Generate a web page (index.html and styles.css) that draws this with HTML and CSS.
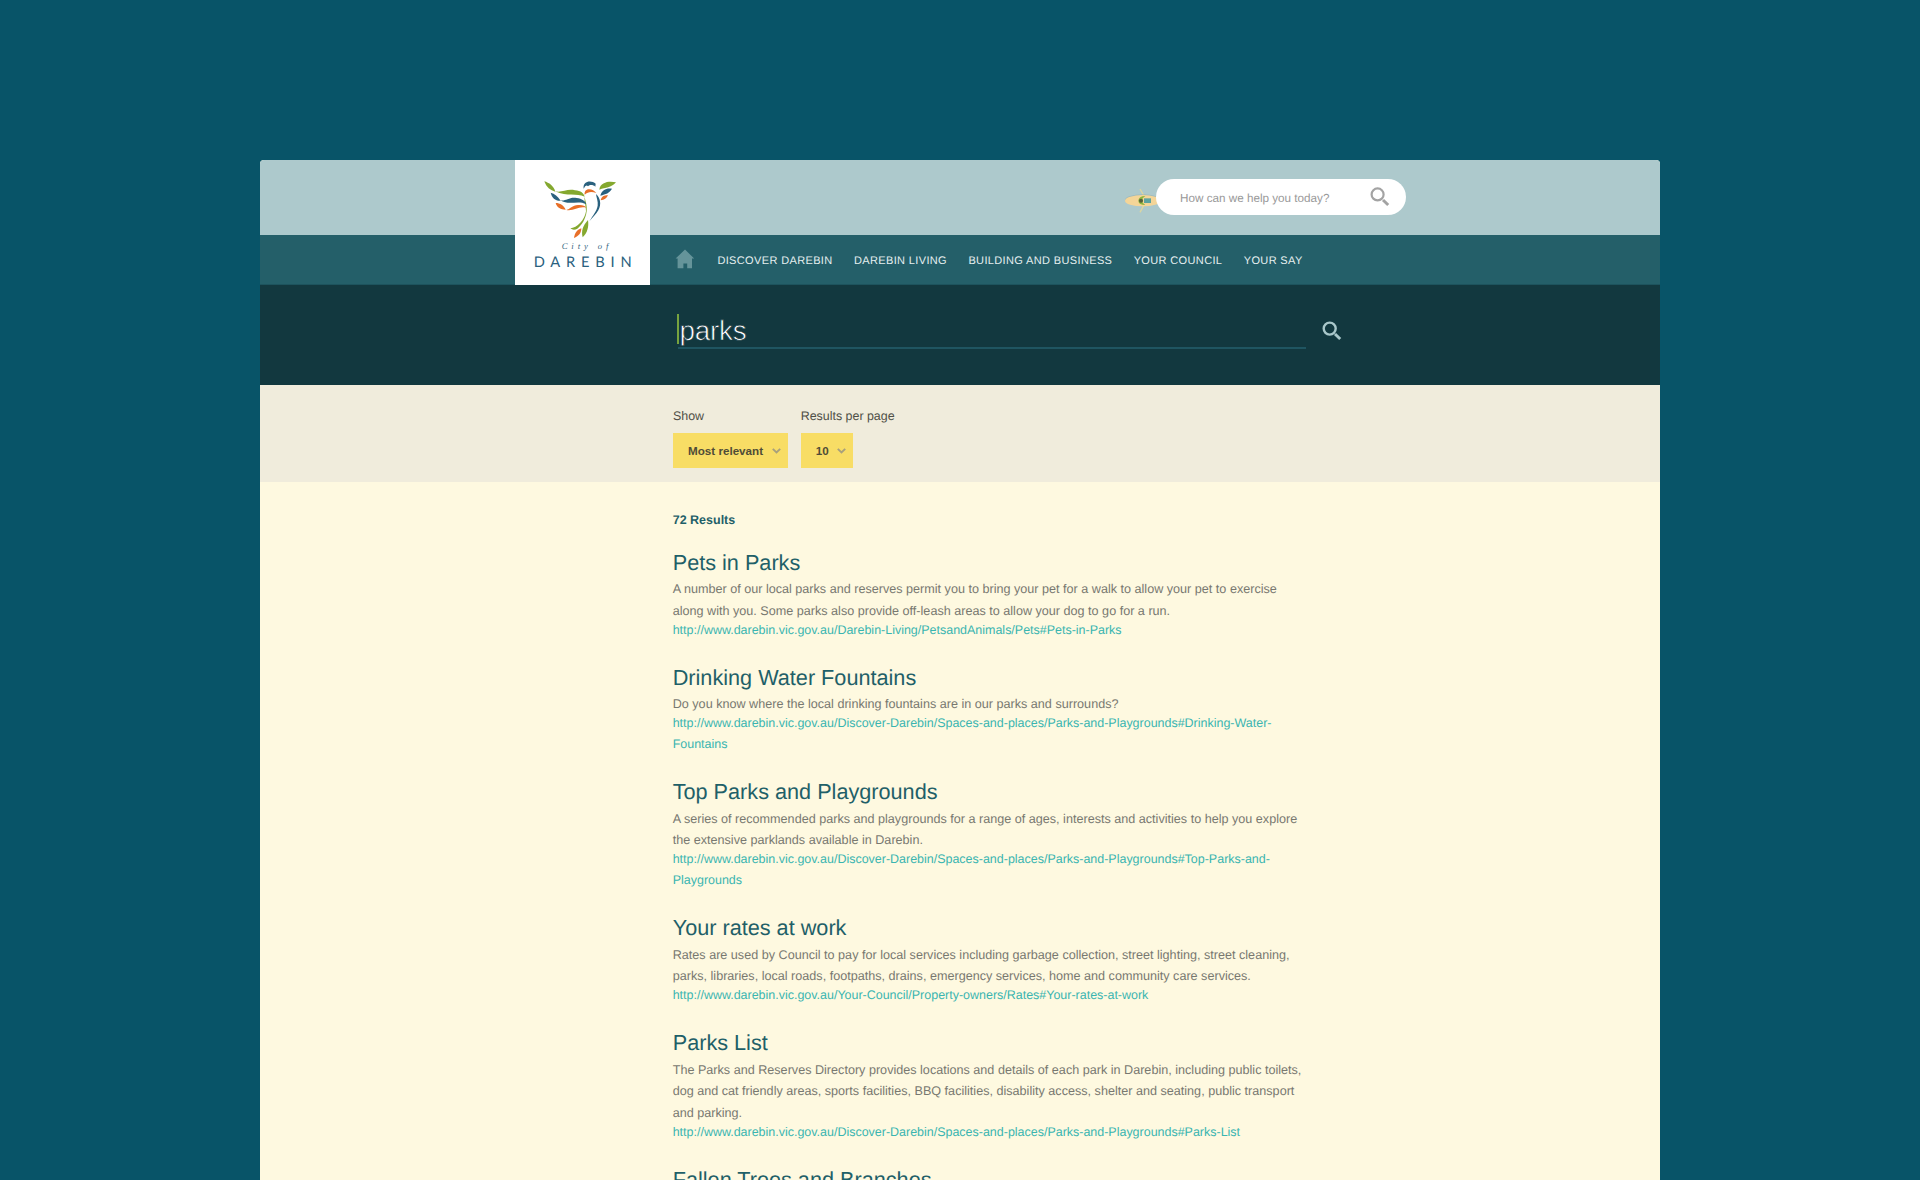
FILE: index.html
```html
<!DOCTYPE html>
<html lang="en">
<head>
<meta charset="utf-8">
<title>Search results - City of Darebin</title>
<link rel="stylesheet" href="styles.css">
</head>
<body>
<div class="page">
  <header class="header">
    <div class="topbar">
      <svg class="kayak" viewBox="0 0 105 80" aria-hidden="true">
        <path d="M48 6 L62 30 M48 76 L62 50" stroke="#dcd6a0" stroke-width="4" fill="none"/>
        <ellipse cx="56" cy="39" rx="53" ry="17" fill="#91aeb0" opacity=".6"/>
        <ellipse cx="56" cy="41" rx="53" ry="17" fill="#f4d598"/>
        <rect x="60" y="34" width="21" height="14" fill="#5ba3a0"/>
        <path d="M64 27 Q44 27 43 41 Q44 54 64 54 L56 47 V34 Z" fill="#8fb63c"/>
        <circle cx="51" cy="41" r="6" fill="#56603c"/>
      </svg>
      <form class="help-search">
        <span class="help-text">How can we help you today?</span>
        <svg class="help-icon" viewBox="0 0 20 20" fill="none" stroke="#a3a3a3"><circle cx="7.6" cy="7.4" r="6" stroke-width="2.2"/><path d="M13 13 L18.2 18" stroke-width="3"/></svg>
      </form>
    </div>
    <nav class="nav">
      <svg class="home" viewBox="0 0 20 20" fill="#65949a"><path d="M10 0.5 L19.2 9.6 H17 V19.3 H12.2 V14.4 H8.4 V19.3 H2.6 V9.6 H.6 Z"/></svg>
      <a>DISCOVER DAREBIN</a><a>DAREBIN LIVING</a><a>BUILDING AND BUSINESS</a><a>YOUR COUNCIL</a><a>YOUR SAY</a>
    </nav>
    <a class="logo">
      <svg viewBox="30 30 405 375" width="135" height="125">
        <g fill="#84a82f">
          <path d="M118 94 C132 98 146 108 151 125 C136 121 124 112 118 94 Z"/>
          <path d="M150 124 C172 129 186 115 210 121 C228 123 236 129 239 140 C214 128 188 142 150 124 Z"/>
          <path d="M333 97 C318 93 286 93 283 119 C303 112 317 115 333 97 Z"/>
          <path d="M239 140 C241 154 247 166 245 184 C242 208 230 226 217 236 C210 240 202 240 196 235 C216 235 240 208 243 184 C243 166 237 154 239 140 Z"/>
          <path d="M249 210 C252 230 247 249 233 262 C228 243 233 228 249 210 Z"/>
        </g>
        <g fill="#2a617e">
          <path d="M137 128 C149 131 158 138 167 152 C151 153 141 144 137 128 Z"/>
          <path d="M166 151 C182 155 192 140 215 144 C231 146 241 153 244 163 C218 149 193 168 166 151 Z"/>
          <path d="M236 116 C232 92 260 89 272 101 L271 110 C264 104 254 104 249 109 Q243 101 236 116 Z"/>
          <path d="M273 132 C286 143 290 163 280 181 C274 192 262 203 253 214 C264 195 275 184 278 167 C280 154 274 143 273 132 Z"/>
          <path d="M321 116 C307 113 290 118 286 137 C303 132 313 130 321 116 Z"/>
        </g>
        <g fill="#e86f28">
          <path d="M152 159 C165 159 177 167 182 179 C167 179 156 173 152 159 Z"/>
          <path d="M184 180 C195 178 202 165 219 165 C231 164 240 166 244 173 C220 167 208 184 184 180 Z"/>
          <path d="M239 134 C236 113 263 113 274 129 C261 124 249 124 239 134 Z"/>
          <path d="M309 136 C297 136 289 140 287 151 C298 149 305 146 309 136 Z"/>
          <path d="M229 235 C229 249 221 259 207 264 C209 250 215 240 229 235 Z"/>
        </g>
        <text class="logo-city" x="170" y="297" textLength="140">City of</text>
        <text class="logo-name" x="86" y="352" textLength="294">DAREBIN</text>
      </svg>
    </a>
  </header>

  <section class="query">
    <div class="query-field"><span class="caret"></span>parks</div>
    <svg class="query-icon" viewBox="0 0 20 20" fill="none" stroke="#a9c7ca"><circle cx="7.7" cy="7.6" r="6" stroke-width="2.4"/><path d="M13 13 L18.2 18" stroke-width="3"/></svg>
  </section>

  <section class="filters">
    <div class="filter">
      <label>Show</label>
      <button class="select select-sort">Most relevant<svg viewBox="0 0 9 6"><path d="M.8 .9 L4.5 4.5 L8.2 .9"/></svg></button>
    </div>
    <div class="filter">
      <label>Results per page</label>
      <button class="select">10<svg viewBox="0 0 9 6"><path d="M.8 .9 L4.5 4.5 L8.2 .9"/></svg></button>
    </div>
  </section>

  <main class="results">
    <p class="count">72 Results</p>
    <article class="result">
      <h2>Pets in Parks</h2>
      <p>A number of our local parks and reserves permit you to bring your pet for a walk to allow your pet to exercise<br>along with you. Some parks also provide off-leash areas to allow your dog to go for a run.</p>
      <a>http://www.darebin.vic.gov.au/Darebin-Living/PetsandAnimals/Pets#Pets-in-Parks</a>
    </article>
    <article class="result">
      <h2>Drinking Water Fountains</h2>
      <p>Do you know where the local drinking fountains are in our parks and surrounds?</p>
      <a>http://www.darebin.vic.gov.au/Discover-Darebin/Spaces-and-places/Parks-and-Playgrounds#Drinking-Water-<br>Fountains</a>
    </article>
    <article class="result">
      <h2>Top Parks and Playgrounds</h2>
      <p>A series of recommended parks and playgrounds for a range of ages, interests and activities to help you explore<br>the extensive parklands available in Darebin.</p>
      <a>http://www.darebin.vic.gov.au/Discover-Darebin/Spaces-and-places/Parks-and-Playgrounds#Top-Parks-and-<br>Playgrounds</a>
    </article>
    <article class="result">
      <h2>Your rates at work</h2>
      <p>Rates are used by Council to pay for local services including garbage collection, street lighting, street cleaning,<br>parks, libraries, local roads, footpaths, drains, emergency services, home and community care services.</p>
      <a>http://www.darebin.vic.gov.au/Your-Council/Property-owners/Rates#Your-rates-at-work</a>
    </article>
    <article class="result">
      <h2>Parks List</h2>
      <p>The Parks and Reserves Directory provides locations and details of each park in Darebin, including public toilets,<br>dog and cat friendly areas, sports facilities, BBQ facilities, disability access, shelter and seating, public transport<br>and parking.</p>
      <a>http://www.darebin.vic.gov.au/Discover-Darebin/Spaces-and-places/Parks-and-Playgrounds#Parks-List</a>
    </article>
    <article class="result">
      <h2>Fallen Trees and Branches</h2>
    </article>
  </main>
</div>
</body>
</html>
```

FILE: styles.css
```css
* { box-sizing: border-box; }
html, body { height: 100%; }
body {
  margin: 0;
  padding-top: 160px;
  overflow: hidden;
  background: #085468;
  font-family: "Liberation Sans", Arial, sans-serif;
  text-rendering: geometricPrecision;
}
h2, p { margin: 0; font-weight: normal; }

.page {
  width: 1400px;
  height: 1020px;
  margin: 0 auto;
  overflow: hidden;
  border-radius: 4px 4px 0 0;
  background: #fef9e0;
}

.header { position: relative; }
.topbar {
  display: flex;
  align-items: center;
  justify-content: flex-end;
  height: 75px;
  padding-right: 254px;
  background: #adc9cc;
}
.kayak { width: 35px; height: 26.7px; margin: 6px -3.5px 0 0; }
.help-search {
  position: relative;
  display: flex;
  align-items: center;
  justify-content: space-between;
  width: 250.5px;
  height: 36px;
  margin-bottom: 1px;
  padding: 0 16px 0 24.5px;
  border-radius: 18px;
  background: #fff;
}
.help-text { padding-top: 2px; color: #999; font-size: 11.7px; }
.help-icon { width: 20px; height: 20px; }

.nav {
  display: flex;
  align-items: center;
  gap: 21.4px;
  height: 50px;
  padding-left: 415px;
  border-bottom: 1px solid #1d535d;
  background: #245f69;
  color: #e6eff0;
  font-size: 11px;
  letter-spacing: .36px;
}
.nav a { padding-top: 3px; }
.home { width: 20px; height: 20px; margin: 0 1px 2px 0; }

.logo { position: absolute; left: 255px; top: 0; width: 135px; height: 125px; background: #fff; }
.logo svg { display: block; }
.logo-city { font: italic 26px "Liberation Serif", serif; fill: #356781; }
.logo-name { font: 44px Lato, sans-serif; fill: #2a617e; }

.query {
  display: flex;
  align-items: flex-start;
  gap: 16px;
  height: 100px;
  padding: 28px 0 0 418px;
  background: #12383f;
}
.query-field {
  position: relative;
  width: 627.5px;
  height: 36px;
  padding-left: 1.5px;
  border-bottom: 2px solid #1f5561;
  color: #fff;
  font-size: 27.8px;
  line-height: 36.2px;
  letter-spacing: -.2px;
  -webkit-text-stroke: .7px #12383f;
}
.caret { position: absolute; left: -1px; top: 1px; width: 2px; height: 30px; background: #77a33f; }
.query-icon { width: 20px; height: 20px; margin-top: 8px; }

.filters {
  display: flex;
  gap: 12.7px;
  height: 96.5px;
  padding: 21px 0 0 413px;
  background: #f0ecdc;
  color: #4f4f47;
}
.filter { width: 115px; }
.filter label { display: block; height: 26.5px; font-size: 12.43px; line-height: 20.5px; }
.select {
  display: flex;
  align-items: center;
  justify-content: space-between;
  width: 52px;
  height: 35.5px;
  padding: 0 7px 0 15px;
  border: 0;
  background: #f8dd65;
  color: #4f4c37;
  font: bold 11.65px "Liberation Sans", Arial, sans-serif;
}
.select-sort { width: 115px; }
.select svg { width: 9px; height: 6px; margin-top: 1px; fill: none; stroke: #a8a07c; stroke-width: 1.9; }

.results { padding: 28px 0 0 412.7px; }
.results .count { margin-bottom: 20.4px; color: #1f6068; font-size: 12.5px; font-weight: bold; line-height: 20px; }
.result { margin-bottom: 24.6px; }
.result h2 { margin-bottom: 3.4px; color: #1f6068; font-size: 21.67px; line-height: 26px; }
.result p { margin-bottom: -2.8px; color: #787870; font-size: 12.61px; line-height: 21.67px; white-space: nowrap; }
.result a { display: block; color: #3ab5b0; font-size: 12.47px; line-height: 20.67px; white-space: nowrap; }
```
